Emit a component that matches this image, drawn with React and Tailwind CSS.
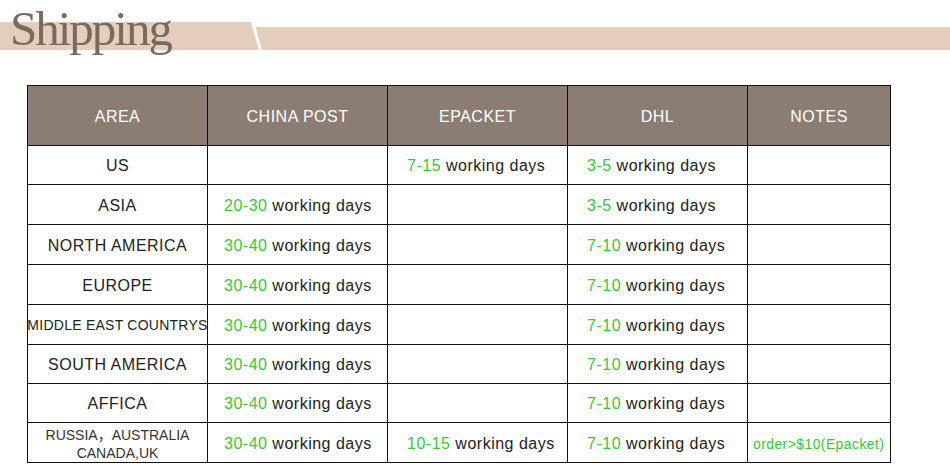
import React from "react";

const G = ({ children }) => <span className="text-[#38c838]">{children}</span>;

const rows = [
  { area: "US", cp: null, ep: "7-15", dhl: "3-5" },
  { area: "ASIA", cp: "20-30", ep: null, dhl: "3-5" },
  { area: "NORTH AMERICA", cp: "30-40", ep: null, dhl: "7-10" },
  { area: "EUROPE", cp: "30-40", ep: null, dhl: "7-10" },
  { area: "MIDDLE EAST COUNTRYS", small: true, cp: "30-40", ep: null, dhl: "7-10" },
  { area: "SOUTH AMERICA", cp: "30-40", ep: null, dhl: "7-10" },
  { area: "AFFICA", cp: "30-40", ep: null, dhl: "7-10" },
  { area: "RUSSIA", two: true, cp: "30-40", ep: "10-15", dhl: "7-10", note: "order>$10(Epacket)" },
];

const Days = ({ n }) =>
  n ? (
    <span>
      <G>{n}</G> working days
    </span>
  ) : null;

export default function App() {
  const cell = "border-r border-b border-[#111] flex items-center";
  return (
    <div
      className="w-[950px] h-[475px] bg-white overflow-hidden"
      style={{ fontFamily: '"Liberation Sans", Arial, sans-serif' }}
    >
      {/* Banner */}
      <div className="h-[50px] flex items-end">
        <div className="w-[262px] h-[28px] bg-[#e5cdbd] [clip-path:polygon(0_0,251px_0,259px_100%,0_100%)]"></div>
        <div className="ml-[-7px] flex-1 h-[23px] bg-[#e5cdbd] [clip-path:polygon(0.5px_0,100%_0,100%_100%,7px_100%)]"></div>
      </div>
      <div className="relative h-0">
        <span
          className="absolute left-[10px] top-[-46px] text-[49px] leading-none tracking-[-2px] text-[#7a695d] whitespace-nowrap"
          style={{ fontFamily: '"Liberation Serif", "Times New Roman", serif' }}
        >
          Shipping
        </span>
      </div>

      {/* Table */}
      <div className="mt-[35px] ml-[27px] w-[864px] grid grid-cols-[180px_180px_180px_180px_143px] grid-rows-[60px_39px_40px_40px_40px_40px_39px_39px_40px] border-l border-t border-[#111] text-[16px] tracking-[0.5px] text-[#222]">
        {["AREA", "CHINA POST", "EPACKET", "DHL", "NOTES"].map((h) => (
          <div key={h} className={`${cell} justify-center bg-[#8b7d73] text-white pt-[2px]`}>
            {h}
          </div>
        ))}
        {rows.map((r, i) => (
          <React.Fragment key={i}>
            <div className={`${cell} justify-center text-center pt-[2px]`}>
              {r.two ? (
                <div
                  className="text-[14px] leading-[18px] tracking-[0px] text-[#333]"
                  style={{ fontFamily: '"Liberation Sans", Arial, "Noto Sans CJK SC", sans-serif' }}
                >
                  RUSSIA，AUSTRALIA
                  <br />
                  CANADA,UK
                </div>
              ) : r.small ? (
                <span className="text-[14px] tracking-[0.25px] whitespace-nowrap">{r.area}</span>
              ) : (
                r.area
              )}
            </div>
            <div className={`${cell} pl-[16px] pt-[2px] whitespace-nowrap`}>
              <Days n={r.cp} />
            </div>
            <div className={`${cell} pl-[19px] pt-[2px] whitespace-nowrap`}>
              <Days n={r.ep} />
            </div>
            <div className={`${cell} pl-[19px] pt-[2px] whitespace-nowrap`}>
              <Days n={r.dhl} />
            </div>
            <div className={`${cell} pl-[5px] pt-[4px] whitespace-nowrap`}>
              {r.note ? (
                <span className="text-[14px] tracking-[0.4px] text-[#38c838]">{r.note}</span>
              ) : null}
            </div>
          </React.Fragment>
        ))}
      </div>
    </div>
  );
}
